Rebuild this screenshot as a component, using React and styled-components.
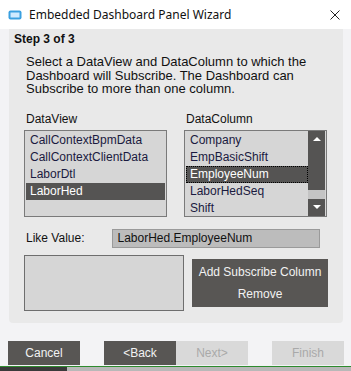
import styled, { createGlobalStyle } from "styled-components";

const Global = createGlobalStyle`
  html, body { margin: 0; padding: 0; }
  body {
    width: 351px;
    height: 371px;
    overflow: hidden;
    background: #f3f3f5;
    font-family: "Liberation Sans", Arial, sans-serif;
  }
`;

const views = ["CallContextBpmData", "CallContextClientData", "LaborDtl", "LaborHed"];
const columns = ["Company", "EmpBasicShift", "EmployeeNum", "LaborHedSeq", "Shift"];

function App() {
  return (
    <Window>
      <Global />
      <TitleBar>
        <AppIcon viewBox="0 0 14 10" width="14" height="10">
          <rect x="0.5" y="0.5" width="13" height="9" rx="2" fill="#3aa0e0" />
          <rect x="2.5" y="2.5" width="9" height="5" fill="#cfeaff" />
        </AppIcon>
        <Title>Embedded Dashboard Panel Wizard</Title>
        <Close viewBox="0 0 10 10" width="10" height="10">
          <path d="M0.5 0.5 L9.5 9.5 M9.5 0.5 L0.5 9.5" stroke="#222" strokeWidth="1" />
        </Close>
      </TitleBar>
      <Body>
        <Panel>
          <Step>Step 3 of 3</Step>
          <Content>
            <Description>
              Select a DataView and DataColumn to which the Dashboard will Subscribe. The Dashboard can
              Subscribe to more than one column.
            </Description>
            <Lists>
              <ListGroup>
                <Label>DataView</Label>
                <ListBox>
                  <Items>
                    {views.map((v) => (
                      <Item key={v} selected={v === "LaborHed"}>
                        {v}
                      </Item>
                    ))}
                  </Items>
                </ListBox>
              </ListGroup>
              <ListGroup>
                <Label>DataColumn</Label>
                <ListBox>
                  <Items>
                    {columns.map((c) => (
                      <Item key={c} selected={c === "EmployeeNum"} focused={c === "EmployeeNum"}>
                        {c}
                      </Item>
                    ))}
                  </Items>
                  <ScrollBar>
                    <Arrow>
                      <svg width="8" height="4" viewBox="0 0 8 4">
                        <path d="M0 4 L4 0 L8 4 Z" fill="#fff" />
                      </svg>
                    </Arrow>
                    <Track>
                      <Thumb />
                    </Track>
                    <Arrow>
                      <svg width="8" height="4" viewBox="0 0 8 4">
                        <path d="M0 0 L4 4 L8 0 Z" fill="#fff" />
                      </svg>
                    </Arrow>
                  </ScrollBar>
                </ListBox>
              </ListGroup>
            </Lists>
            <LikeRow>
              <Label>Like Value:</Label>
              <ValueBox>LaborHed.EmployeeNum</ValueBox>
            </LikeRow>
            <SubscribeRow>
              <EmptyList />
              <ActionPanel>
                <ActionText>Add Subscribe Column</ActionText>
                <ActionText>Remove</ActionText>
              </ActionPanel>
            </SubscribeRow>
          </Content>
        </Panel>
        <Footer>
          <WizButton>Cancel</WizButton>
          <Pair>
            <WizButton>&lt;Back</WizButton>
            <WizButton disabled>Next&gt;</WizButton>
          </Pair>
          <WizButton disabled>Finish</WizButton>
        </Footer>
      </Body>
      <Taskbar>
        <TaskDark />
        <TaskLight />
      </Taskbar>
    </Window>
  );
}

const Window = styled.div`
  display: flex;
  flex-direction: column;
  width: 351px;
  height: 371px;
`;

const TitleBar = styled.div`
  height: 30px;
  background: #ffffff;
  display: flex;
  align-items: center;
  padding: 0 11px 0 8px;
  box-sizing: border-box;
`;

const AppIcon = styled.svg`
  margin-right: 7px;
  margin-top: 1px;
`;

const Title = styled.div`
  flex: 1;
  font-family: "Noto Sans", "Open Sans", sans-serif;
  font-size: 12px;
  color: #111;
`;

const Close = styled.svg`
  margin-top: 1px;
`;

const Body = styled.div`
  flex: 1;
  display: flex;
  flex-direction: column;
  padding: 0 7px 0 8px;
`;

const Panel = styled.div`
  margin: 0 1px;
  height: 294px;
  background: #e9e9e9;
  border-radius: 0 0 4px 4px;
  padding: 3px 0 0 5px;
  box-sizing: border-box;
`;

const Step = styled.div`
  font-size: 12px;
  font-weight: bold;
  color: #111;
  line-height: 14px;
`;

const Content = styled.div`
  padding: 0 15px 0 10px;
`;

const Description = styled.div`
  margin: 9px 0 0 2px;
  font-size: 13px;
  line-height: 13.5px;
  color: #111;
`;

const Lists = styled.div`
  margin-top: 16px;
  display: flex;
  gap: 17px;
`;

const ListGroup = styled.div`
  display: flex;
  flex-direction: column;
`;

const Label = styled.div`
  font-size: 12px;
  color: #111;
  margin-left: 2px;
  line-height: 14px;
`;

const ListBox = styled.div`
  margin-top: 4px;
  width: 143px;
  height: 87px;
  box-sizing: border-box;
  border: 1px solid #7a7a7a;
  background: #d6d6d6;
  display: flex;
  padding: 1px 1px 0 1px;
  overflow: hidden;
`;

const Items = styled.div`
  flex: 1;
  display: flex;
  flex-direction: column;
  min-width: 0;
  overflow: hidden;
`;

const Item = styled.div`
  height: 17px;
  flex: none;
  width: 100%;
  box-sizing: border-box;
  font-size: 12px;
  line-height: 15px;
  color: ${(p) => (p.selected ? "#ffffff" : "#1a1a40")};
  background: ${(p) => (p.selected ? "#555453" : "transparent")};
  border: 1px ${(p) => (p.focused ? "dotted #000" : "solid transparent")};
  border-left-width: ${(p) => (p.focused ? "1px" : "0")};
  padding-left: ${(p) => (p.focused ? "3px" : "4px")};
  white-space: nowrap;
  overflow: hidden;
`;

const ScrollBar = styled.div`
  width: 17px;
  flex: none;
  margin: -1px 0 0 0;
  background: #555453;
  display: flex;
  flex-direction: column;
`;

const Arrow = styled.div`
  height: 17px;
  display: flex;
  align-items: center;
  justify-content: center;
`;

const Track = styled.div`
  flex: 1;
  position: relative;
`;

const Thumb = styled.div`
  position: absolute;
  left: 0;
  right: 0;
  bottom: 0;
  height: 9px;
  background: #c4c4c4;
`;

const LikeRow = styled.div`
  margin-top: 12px;
  display: flex;
  align-items: center;
  gap: 28px;
`;

const ValueBox = styled.div`
  width: 208px;
  height: 19px;
  box-sizing: border-box;
  background: #bcbcbc;
  border: 1px solid #9a9a9a;
  font-size: 12px;
  line-height: 17px;
  padding-left: 4px;
  color: #111;
`;

const SubscribeRow = styled.div`
  margin-top: 7px;
  display: flex;
  align-items: center;
  gap: 8px;
`;

const EmptyList = styled.div`
  width: 160px;
  height: 56px;
  box-sizing: border-box;
  border: 1px solid #6e6e6e;
  background: #d6d6d6;
`;

const ActionPanel = styled.div`
  width: 136px;
  height: 48px;
  background: #585654;
  display: flex;
  flex-direction: column;
  align-items: center;
  justify-content: space-around;
  padding: 2px 0;
  box-sizing: border-box;
`;

const ActionText = styled.div`
  font-size: 12px;
  color: #f2f2f2;
`;

const Footer = styled.div`
  margin-top: 18px;
  display: flex;
  justify-content: space-between;
`;

const Pair = styled.div`
  display: flex;
`;

const WizButton = styled.div`
  width: 72px;
  height: 24px;
  display: flex;
  align-items: center;
  justify-content: center;
  font-size: 12px;
  background: ${(p) => (p.disabled ? "#d9d9d9" : "#585654")};
  color: ${(p) => (p.disabled ? "#a9a9a9" : "#f2f2f2")};
`;

const Taskbar = styled.div`
  margin-top: 1px;
  height: 4px;
  border-top: 1px solid #2e8b2e;
  display: flex;
`;

const TaskDark = styled.div`
  width: 67px;
  background: #3a3a3a;
`;

const TaskLight = styled.div`
  flex: 1;
  background: #b8b8b8;
`;

export default App;
